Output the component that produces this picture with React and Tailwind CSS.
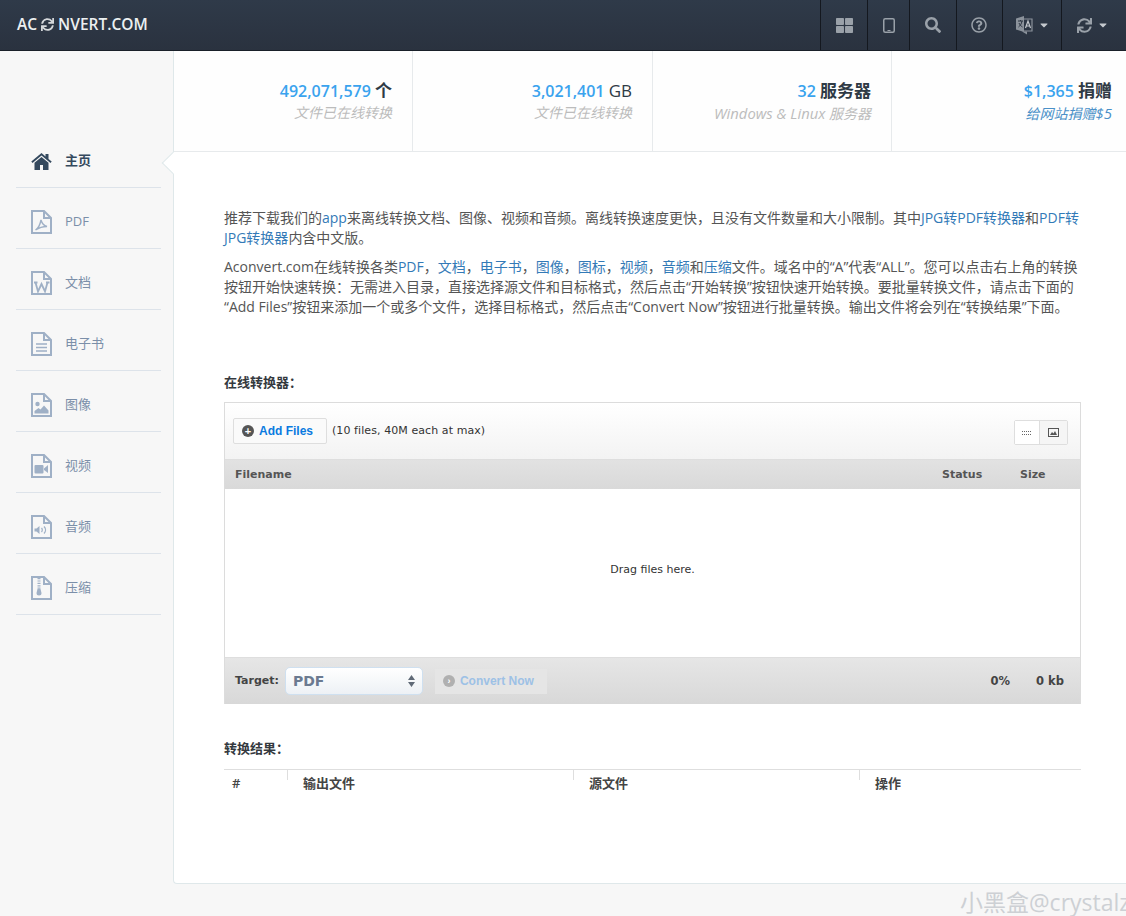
import React from "react";
import { FaThLarge, FaSearch, FaRegQuestionCircle, FaSync, FaCaretDown } from "react-icons/fa";

const cjk = "font-['Open_Sans','Noto_Sans_CJK_SC',sans-serif]";
const verdana = "font-['DejaVu_Sans','Noto_Sans_CJK_SC',sans-serif]";

// file outline with folded corner, children go inside
const FileIcon = ({ children }) => (
    <svg width="21" height="24" viewBox="0 0 21 24" className="shrink-0">
        <path d="M1 1h12l7 7v15H1z M13 1v7h7" fill="none" stroke="#9fb0c6" strokeWidth="2" />
        {children}
    </svg>
);

const HomeIcon = () => (
    <svg width="21" height="17" viewBox="0 0 21 17">
        <path d="M10.500 0L0.300 8.600 1.500 10 10.500 2.500 19.500 10 20.700 8.600 17.500 5.900V1h-3v2.400z" fill="#34495e" />
        <path d="M10.500 4L3.500 9.800V17h5.500v-5h3v5h5.500V9.800z" fill="#34495e" />
    </svg>
);

const LangIcon = () => (
    <svg width="18" height="20" viewBox="0 0 18 20">
        <path d="M1 3.500l8-2.500v16l-8-2.500z" fill="#8b929b" />
        <path d="M9 4h8v12H9" fill="none" stroke="#8b929b" strokeWidth="1.200" />
        <path d="M10.500 13l2.500-7 2.500 7M11.500 11h3" fill="none" stroke="#c4c8cd" strokeWidth="1.200" />
        <path d="M3 6h5M5.500 5v1M7 6c-.5 3-2 5-3.500 6M4 8c.8 2 2 3 3.500 4" fill="none" stroke="#2b3441" strokeWidth="1" />
        <path d="M7 16.500l5 3v-3z" fill="#8b929b" />
    </svg>
);

const TabletIcon = () => (
    <svg width="12" height="15" viewBox="0 0 12 15">
        <rect x="0.750" y="0.750" width="10.500" height="13.500" rx="1.500" fill="none" stroke="#9aa1a9" strokeWidth="1.500" />
        <rect x="4.500" y="12" width="3" height="1" fill="#9aa1a9" />
    </svg>
);

const navItems = [
    {
        label: "PDF",
        icon: <path d="M4.500 20c2.500-1.500 4.500-5 5.500-10 1 3.500 2.500 5.500 6 6.500-3.500 0-7 .5-11.500 3.500z" fill="none" stroke="#9fb0c6" strokeWidth="1.400" />,
    },
    {
        label: "文档",
        icon: <path d="M3 11.500h3.500M15 11.500h3.500M4.500 11.500l2.500 9 3.500-7.500 3.500 7.500 2.500-9" fill="none" stroke="#9fb0c6" strokeWidth="1.800" />,
    },
    {
        label: "电子书",
        icon: <path d="M5 12h11M5 15.500h11M5 19h11" fill="none" stroke="#9fb0c6" strokeWidth="1.500" />,
    },
    {
        label: "图像",
        icon: (
            <>
                <circle cx="6.500" cy="11" r="2.200" fill="#9fb0c6" />
                <path d="M3.500 20.500v-2.500l4-3 2 1.500 3.500-4 4.500 5v3z" fill="#9fb0c6" />
            </>
        ),
    },
    {
        label: "视频",
        icon: (
            <>
                <rect x="3.500" y="11" width="9" height="8.500" rx="1" fill="#9fb0c6" />
                <path d="M13 14.500l4-3.500v8l-4-3z" fill="#9fb0c6" />
            </>
        ),
    },
    {
        label: "音频",
        icon: (
            <>
                <path d="M3.500 13.500h2l3-2.500v8l-3-2.500h-2z" fill="#9fb0c6" />
                <path d="M10.500 13c1 1 1 3 0 4M13 11.500c2 2 2 5 0 7" fill="none" stroke="#9fb0c6" strokeWidth="1.300" />
            </>
        ),
    },
    {
        label: "压缩",
        icon: (
            <>
                <path d="M8 2v11" fill="none" stroke="#9fb0c6" strokeWidth="3" strokeDasharray="1.200 1.200" />
                <path d="M6.500 13h3l1 4a2.500 2.500 0 1 1-5 0z" fill="#9fb0c6" />
            </>
        ),
    },
];

const stats = [
    { num: "492,071,579", unit: "个", sub: "文件已在线转换", w: "w-[239px]" },
    { num: "3,021,401", unit: "GB", sub: "文件已在线转换", w: "w-[240px]", thin: true },
    { num: "32", unit: "服务器", sub: <><span className="text-[14.800px]">Windows &amp; Linux</span> 服务器</>, w: "w-[239px]" },
    { num: "$1,365", unit: "捐赠", sub: <>给网站捐赠<span className="text-[15px]">$5</span></>, w: "flex-1", link: true },
];

const A = ({ children }) => <a className="text-[#337ab7]">{children}</a>;

const App = () => {
    return (
        <div className={`${cjk} relative h-[916px] w-[1126px] overflow-hidden bg-[#f7f7f7]`}>
            {/* top bar */}
            <header className="flex h-[51px] items-stretch justify-between border-b border-[#1a2029] bg-gradient-to-b from-[#2f3a49] to-[#2a323f]">
                <div className="flex items-center gap-[4px] pb-[1px] pl-[17px] text-[15.500px] font-semibold text-[#ecf0f1]">
                    <span>AC</span>
                    <FaSync className="text-[13px] text-[#d5d8db]" />
                    <span>NVERT.COM</span>
                </div>
                <div className="flex items-stretch text-[#9aa1a9]">
                    <div className="flex w-[47px] items-center justify-center border-l border-[#14181f]">
                        <FaThLarge className="text-[17px]" />
                    </div>
                    <div className="flex w-[42px] items-center justify-center border-l border-[#14181f]">
                        <TabletIcon />
                    </div>
                    <div className="flex w-[47px] items-center justify-center border-l border-[#14181f]">
                        <FaSearch className="text-[16px]" />
                    </div>
                    <div className="flex w-[46px] items-center justify-center border-l border-[#14181f] pr-[2px]">
                        <FaRegQuestionCircle className="text-[16px]" />
                    </div>
                    <div className="flex w-[59px] items-center justify-center gap-[5px] border-l border-[#14181f]">
                        <LangIcon />
                        <FaCaretDown className="text-[12px] text-[#c5c9ce]" />
                    </div>
                    <div className="flex w-[65px] items-center justify-start gap-[5px] border-l border-[#14181f] pl-[15px]">
                        <FaSync className="text-[15px]" />
                        <FaCaretDown className="text-[12px] text-[#c5c9ce]" />
                    </div>
                </div>
            </header>

            <div className="flex h-[833px]">
                {/* sidebar */}
                <aside className="w-[173px] shrink-0 pl-[16px] pr-[12px] pt-[76px]">
                    <div className="flex h-[61px] items-center gap-[13px] border-b border-[#dde3ea] pl-[15px] pt-[8px]">
                        <HomeIcon />
                        <span className="text-[13px] font-semibold text-[#34495e]">主页</span>
                    </div>
                    {navItems.map((item) => (
                        <div key={item.label} className="flex h-[61px] items-center gap-[13px] border-b border-[#dde3ea] pl-[15px] pt-[8px]">
                            <FileIcon>{item.icon}</FileIcon>
                            <span className="text-[13px] text-[#7b8fa9]">{item.label}</span>
                        </div>
                    ))}
                </aside>

                {/* main panel */}
                <main className="relative h-[833px] flex-1 rounded-bl-[4px] border-b border-l border-[#dfe8ea] bg-white">
                    <div className="flex h-[101px] border-b border-[#e7eaec] bg-[#fefefe]">
                        {stats.map((s, i) => (
                            <div key={i} className={`${s.w} flex flex-col items-end border-r border-[#e7eaec] pr-[20px] pt-[28px] last:border-r-0 last:pr-[14px]`}>
                                <div className="text-[16px] font-semibold leading-[24px] text-[#2f3a45]">
                                    <span className="text-[#3aa3ee]">{s.num}</span> <span className={`text-[17px] ${s.thin ? "font-normal" : ""}`}>{s.unit}</span>
                                </div>
                                <div className={`text-[14px] italic leading-[20px] ${s.link ? "text-[#4a90c8]" : "text-[#bcbcbc]"}`}>{s.sub}</div>
                            </div>
                        ))}
                    </div>
                    {/* arrow notch next to the active nav item */}
                    <div className="absolute left-[-9px] top-[104px] h-[16px] w-[16px] rotate-45 border-b border-l border-[#dfe8ea] bg-white" />

                    <div className="pl-[50px] pr-[45px] pt-[56px] text-[14px] leading-[20px] text-[#555]">
                        <p className="mb-[9px]">
                            推荐下载我们的<A>app</A>来离线转换文档、图像、视频和音频。离线转换速度更快，且没有文件数量和大小限制。其中<A>JPG转PDF转换器</A>和<A>PDF转JPG转换器</A>内含中文版。
                        </p>
                        <p>
                            Aconvert.com在线转换各类<A>PDF</A>，<A>文档</A>，<A>电子书</A>，<A>图像</A>，<A>图标</A>，<A>视频</A>，<A>音频</A>和<A>压缩</A>文件。域名中的“A”代表“ALL”。您可以点击右上角的转换按钮开始快速转换：无需进入目录，直接选择源文件和目标格式，然后点击“开始转换”按钮快速开始转换。要批量转换文件，请点击下面的<br />“Add Files”按钮来添加一个或多个文件，选择目标格式，然后点击“Convert Now”按钮进行批量转换。输出文件将会列在“转换结果”下面。
                        </p>

                        <h3 className="mt-[55px] text-[13px] font-semibold leading-[20px] text-[#34393e]">在线转换器：</h3>

                        {/* uploader box */}
                        <div className={`${verdana} mt-[10px] h-[302px] border-x border-t border-[#dcdcdc]`}>
                            <div className="flex h-[57px] items-start justify-between border-b border-[#dedede] bg-gradient-to-b from-white to-[#f3f3f3] pl-[8px] pr-[12px] pt-[15px]">
                                <div className="flex items-center gap-[5px]">
                                    <div className="flex h-[26px] w-[94px] items-center gap-[5px] rounded-[2px] border border-[#dedede] bg-[#fafafa] pl-[8px] font-['Liberation_Sans',sans-serif] text-[12px] font-bold text-[#0a7ae0]">
                                        <span className="flex h-[12px] w-[12px] items-center justify-center rounded-full bg-[#555] text-[11px] font-bold leading-none text-white">+</span>
                                        Add Files
                                    </div>
                                    <span className="text-[11px] leading-[24px] tracking-[0.08px] text-[#333]">(10 files, 40M each at max)</span>
                                </div>
                                <div className="mt-[2px] flex h-[25px] w-[54px] rounded-[2px] border border-[#dedede]">
                                    <div className="flex w-[25px] items-center justify-center border-r border-[#dedede] bg-white">
                                        <svg width="10" height="4" viewBox="0 0 10 4">
                                            <path d="M0 .5h10M0 3.500h10" stroke="#666" strokeDasharray="1 1" />
                                        </svg>
                                    </div>
                                    <div className="flex flex-1 items-center justify-center bg-[#f5f5f5]">
                                        <svg width="11" height="9" viewBox="0 0 11 9">
                                            <rect x="0.500" y="0.500" width="10" height="8" fill="none" stroke="#555" />
                                            <path d="M2 7l2-3 1.500 1.500L7 3l2 4z" fill="#555" />
                                        </svg>
                                    </div>
                                </div>
                            </div>
                            <div className="flex h-[29px] items-center bg-gradient-to-b from-[#e2e2e2] to-[#d9d9d9] text-[11px] font-bold text-[#555]">
                                <span className="flex-1 pl-[10px]">Filename</span>
                                <span className="w-[78px]">Status</span>
                                <span className="w-[60px]">Size</span>
                            </div>
                            <div className="flex h-[169px] items-center justify-center border-b border-[#dedede] bg-white pb-[7px] text-[11px] text-[#333]">
                                Drag files here.
                            </div>
                            <div className="flex h-[46px] items-center bg-gradient-to-b from-[#e6e6e6] to-[#d8d8d8] pl-[10px] pr-[16px] text-[11.500px] font-bold text-[#444]">
                                <span className="text-[11px]">Target:</span>
                                <div className="ml-[6px] flex h-[28px] w-[138px] items-center justify-between rounded-[5px] border border-[#cfe0f0] bg-gradient-to-b from-white to-[#edf1f5] pl-[7px] pr-[7px] text-[14px] text-[#6b7a90]">
                                    PDF
                                    <svg width="7" height="12" viewBox="0 0 7 12">
                                        <path d="M3.500 0L7 5H0zM0 7h7l-3.500 5z" fill="#606a77" />
                                    </svg>
                                </div>
                                <div className="ml-[12px] flex h-[25px] w-[112px] items-center gap-[5px] bg-[#e5e5e5] pl-[8px] font-['Liberation_Sans',sans-serif] text-[12px] text-[#9dc1e6]">
                                    <span className="flex h-[12px] w-[12px] items-center justify-center rounded-full bg-[#b0b0b0] text-[9px] leading-none text-white">›</span>
                                    Convert Now
                                </div>
                                <span className="ml-auto">0%</span>
                                <span className="ml-[26px]">0 kb</span>
                            </div>
                        </div>

                        <h3 className="mt-[34px] text-[13px] font-semibold leading-[20px] text-[#34393e]">转换结果：</h3>

                        {/* results table header */}
                        <div className="mt-[11px] flex h-[30px] border-t border-[#dedede] text-[13px] font-semibold text-[#444]">
                            <div className="w-[63px] pl-[8px] leading-[26px]">#</div>
                            <div className="relative w-[286px] pl-[16px] leading-[26px] before:absolute before:left-0 before:top-0 before:h-[10px] before:w-px before:bg-[#dedede]">输出文件</div>
                            <div className="relative w-[286px] pl-[16px] leading-[26px] before:absolute before:left-0 before:top-0 before:h-[10px] before:w-px before:bg-[#dedede]">源文件</div>
                            <div className="relative flex-1 pl-[16px] leading-[26px] before:absolute before:left-0 before:top-0 before:h-[10px] before:w-px before:bg-[#dedede]">操作</div>
                        </div>
                    </div>
                </main>
            </div>

            {/* watermark */}
            <div className="absolute bottom-[-3px] left-[960px] whitespace-nowrap text-[23px] text-[#cdd0d4]">小黑盒@crystalz</div>
        </div>
    );
};

export default App;
